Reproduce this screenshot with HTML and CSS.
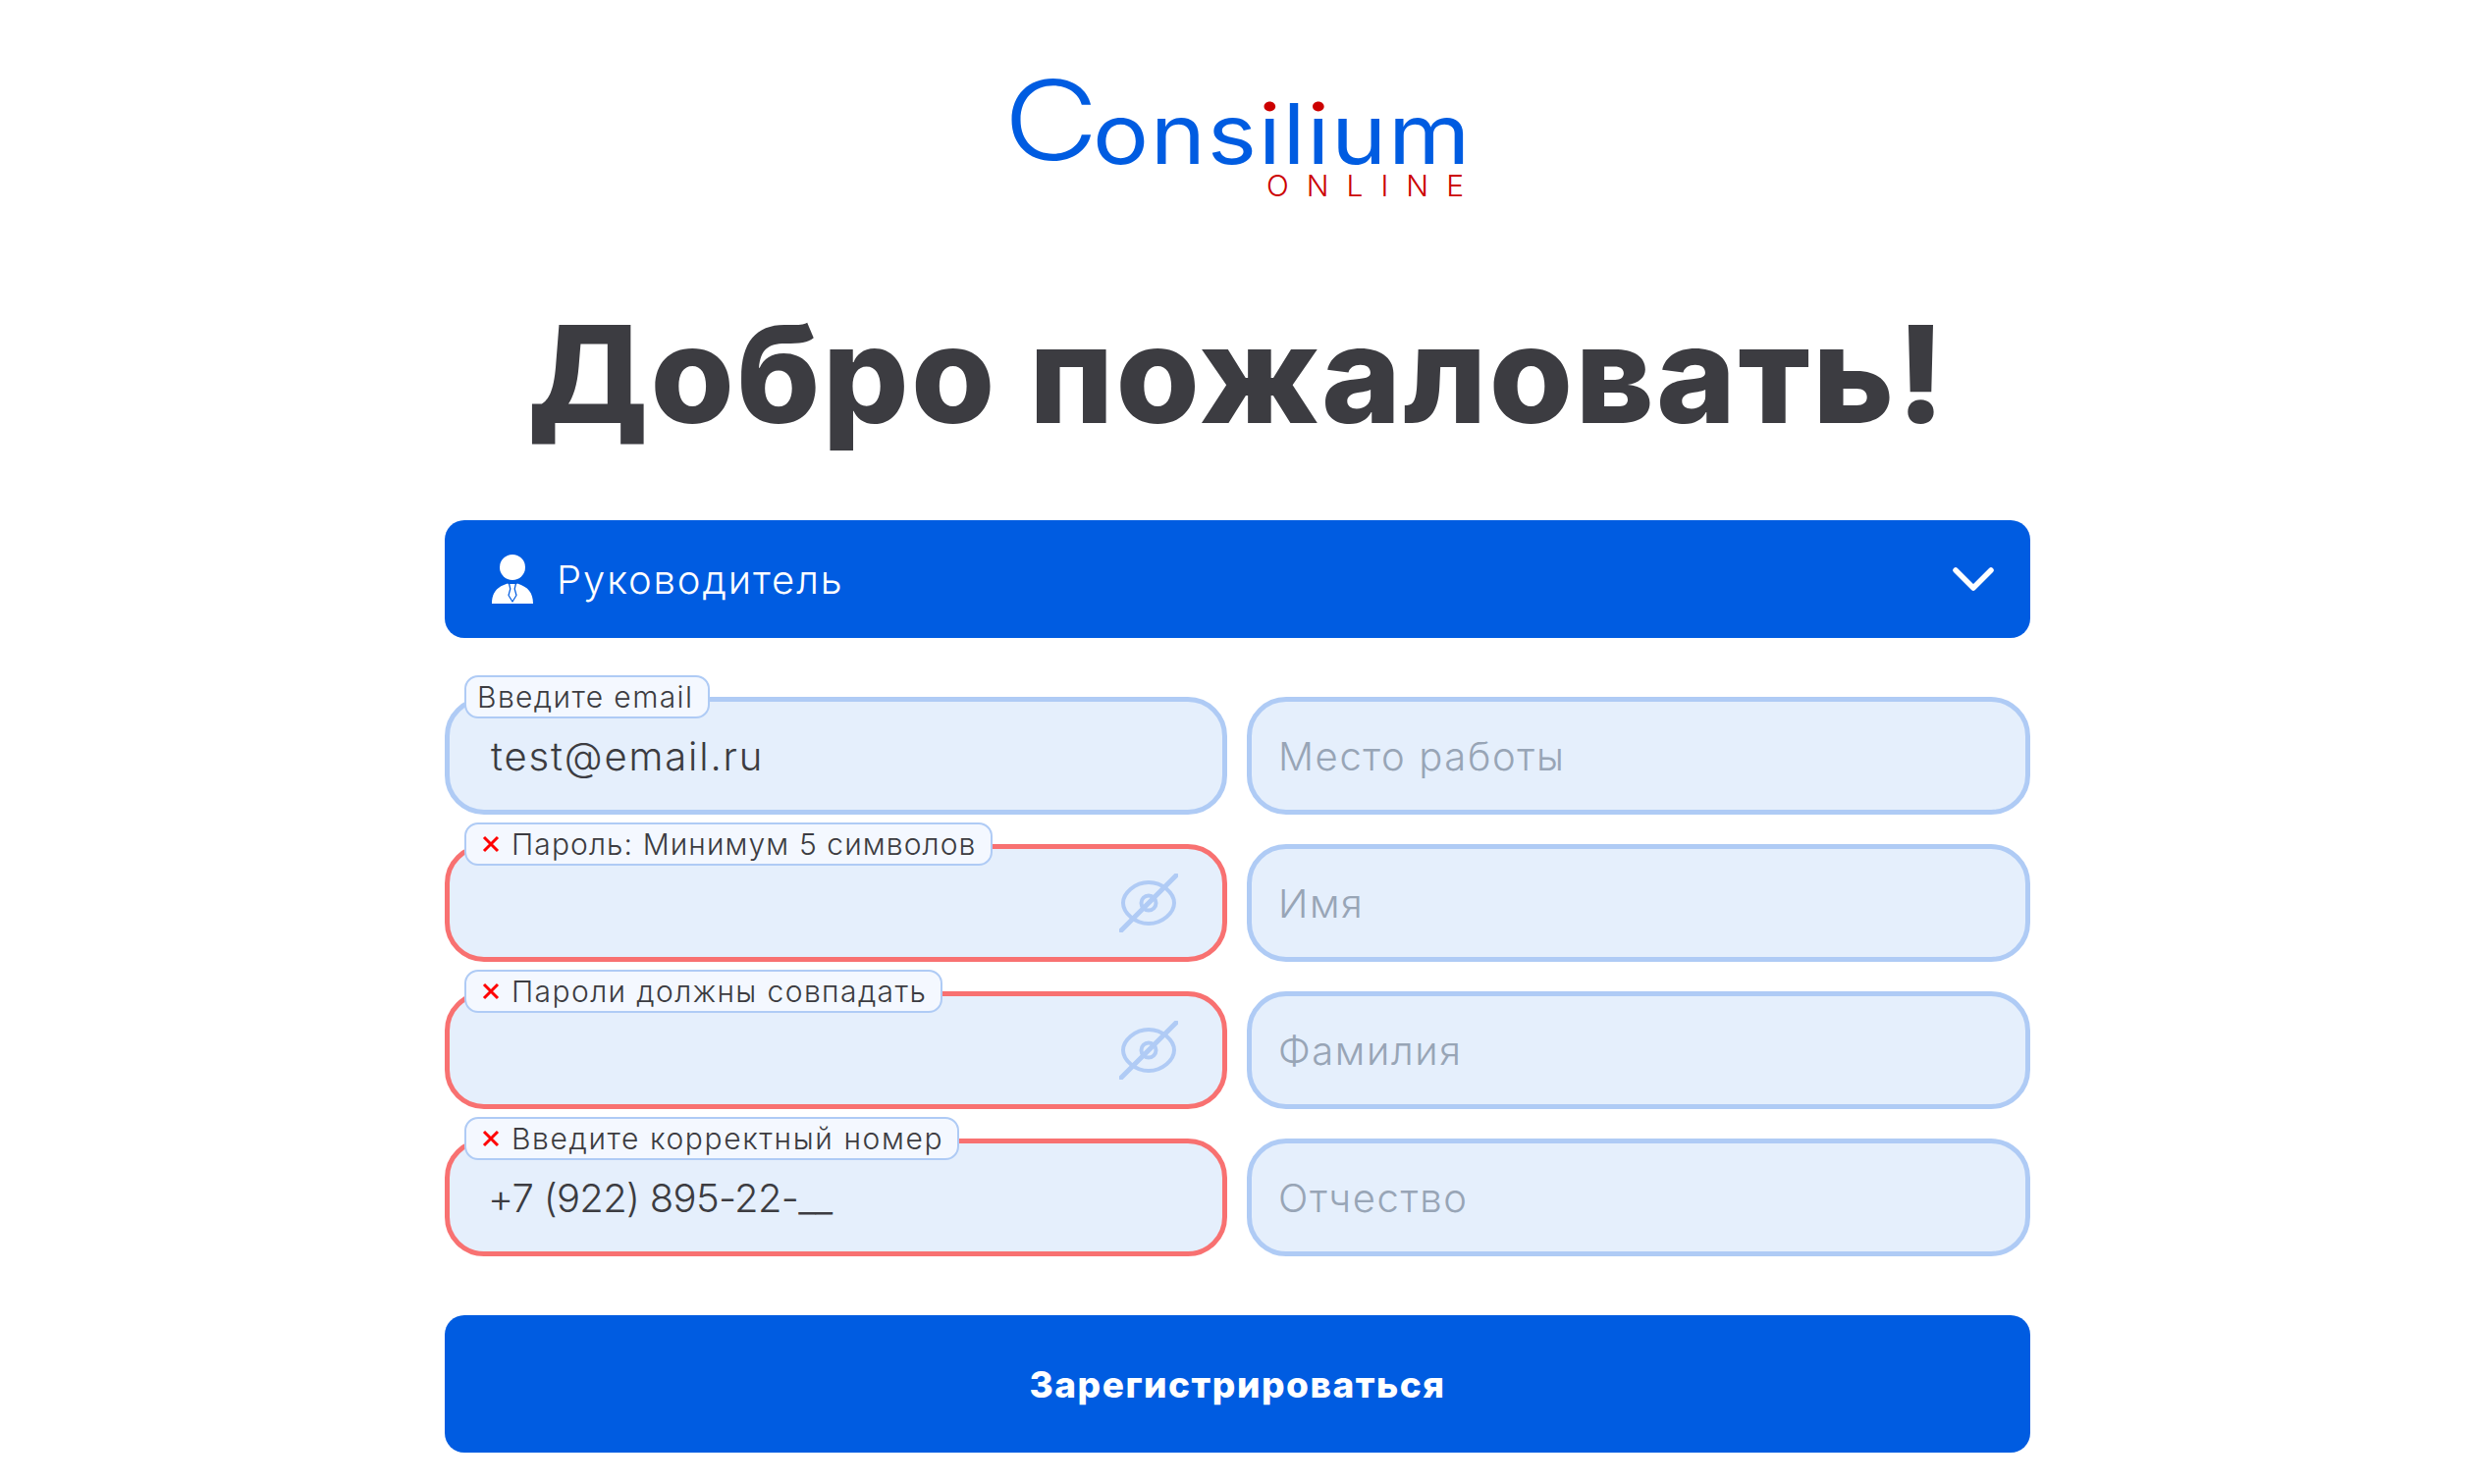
FILE: index.html
```html
<!DOCTYPE html>
<html lang="ru">
<head>
<meta charset="utf-8">
<title>Consilium Online</title>
<link rel="stylesheet" href="styles.css">
</head>
<body>
<main class="page">
  <div class="logo">
    <div class="logo-name"><span class="logo-c">C</span><span class="logo-rest">ons<span class="logo-i">i</span>l<span class="logo-i">i</span>um</span></div>
    <div class="logo-sub">ONLINE</div>
  </div>
  <h1 class="title">Добро пожаловать!</h1>
  <div class="select">
    <svg class="role-icon" viewBox="0 0 42 50" width="42" height="50">
      <circle cx="21" cy="13" r="13" fill="#fff"/>
      <path d="M0 50C0 39 5 33 16 29.500L21 33 26 29.500C37 33 42 39 42 50Z" fill="#fff"/>
      <path d="M17.500 29.500H24.500L23.200 35 25 41.500 21 48 17 41.500 18.800 35Z" fill="#fff" stroke="#005ce1" stroke-width="1.200" stroke-linejoin="round"/>
    </svg>
    <span class="select-text">Руководитель</span>
    <svg class="chevron" viewBox="0 0 44 26" width="44" height="26">
      <path d="M4 4L22 22 40 4" fill="none" stroke="#fff" stroke-width="5.500" stroke-linecap="round" stroke-linejoin="round"/>
    </svg>
  </div>
  <div class="fields">
    <div class="field field-left"><span class="hint hint-plain">Введите email</span><span class="value value-email">test@email.ru</span></div>
    <div class="field field-right"><span class="placeholder">Место работы</span></div>
    <div class="field field-left field-error">
      <span class="hint hint-tight"><svg class="cross" viewBox="0 0 18 18" width="18" height="18"><path d="M2 2L16 16M16 2L2 16" stroke="#ff0000" stroke-width="3"/></svg>Пароль: Минимум 5 символов</span>
      <svg class="eye" viewBox="0 0 60 60" width="60" height="60"><use href="#eye-shape"/></svg>
    </div>
    <div class="field field-right"><span class="placeholder">Имя</span></div>
    <div class="field field-left field-error">
      <span class="hint"><svg class="cross" viewBox="0 0 18 18" width="18" height="18"><path d="M2 2L16 16M16 2L2 16" stroke="#ff0000" stroke-width="3"/></svg>Пароли должны совпадать</span>
      <svg class="eye" viewBox="0 0 60 60" width="60" height="60"><use href="#eye-shape"/></svg>
    </div>
    <div class="field field-right"><span class="placeholder">Фамилия</span></div>
    <div class="field field-left field-error">
      <span class="hint hint-wide"><svg class="cross" viewBox="0 0 18 18" width="18" height="18"><path d="M2 2L16 16M16 2L2 16" stroke="#ff0000" stroke-width="3"/></svg>Введите корректный номер</span>
      <span class="value value-phone">+7 (922) 895-22-__</span>
    </div>
    <div class="field field-right"><span class="placeholder">Отчество</span></div>
  </div>
  <button class="submit" type="button">Зарегистрироваться</button>
</main>
<svg class="defs" width="0" height="0">
  <defs>
    <g id="eye-shape" fill="none" stroke="#b0cbf5" stroke-linecap="round">
      <path d="M4 30C4 20 16 9 30 9S56 20 56 30 44 51 30 51 4 40 4 30Z" stroke-width="4"/>
      <circle cx="30" cy="30" r="7.500" stroke-width="4"/>
      <path d="M2 58L58 2" stroke-width="5"/>
    </g>
  </defs>
</svg>
</body>
</html>
```
FILE: styles.css
```css
* { box-sizing: border-box; }
html, body { margin: 0; padding: 0; background: #fff; }
body { font-family: Inter, "Noto Sans", "Liberation Sans", sans-serif; color: #3c3c41; }
.page { width: 1615px; margin: 0 0 0 453px; display: flex; flex-direction: column; align-items: stretch; }
.defs { position: absolute; }

.logo { align-self: center; width: 461px; height: 128px; margin: 76px 0 0; display: flex; flex-direction: column; align-items: flex-end; }
.logo-name { width: 461px; display: flex; align-items: baseline; color: #005ce1; height: 98px; line-height: 100px; }
.logo-c { display: block; width: 88px; margin-left: -8px; font-size: 112px; font-weight: 300; transform: translateY(-4px) scaleX(1.19); transform-origin: left center; }
.logo-rest { display: block; margin-left: 3px; font-size: 85px; font-weight: 400; letter-spacing: 1.5px; transform: scaleX(1.121); transform-origin: left center; white-space: nowrap; }
.logo-i { background: linear-gradient(#cc0000 0, #cc0000 31px, #005ce1 31px); -webkit-background-clip: text; background-clip: text; color: transparent; }
.logo-sub { font-size: 30px; font-weight: 300; line-height: 30px; letter-spacing: 18px; margin-right: -18px; color: #cc0000; }

.title { margin: 103px 0 0; height: 147px; font-size: 138px; line-height: 147px; font-weight: 800; letter-spacing: 2.3px; text-align: center; color: #3c3c41; white-space: nowrap; }

.select { margin-top: 76px; height: 120px; border-radius: 20px; background: #005ce1; color: #fff; display: flex; align-items: center; padding: 0 36px 0 48px; }
.role-icon { flex: none; }
.select-text { font-size: 40px; font-weight: 300; letter-spacing: 1.9px; margin-left: 24px; flex: 1; }
.chevron { flex: none; }

.fields { margin-top: 60px; display: grid; grid-template-columns: 797px 798px; gap: 30px 20px; }
.field { position: relative; height: 120px; border: 5px solid #afcbf5; border-radius: 40px; background: #e5effc; display: flex; align-items: center; font-size: 40px; font-weight: 300; }
.field-left { padding-left: 39px; }
.field-right { padding-left: 27px; }
.field-error { border-color: #f87171; }
.placeholder { color: #98a5b6; letter-spacing: 1.6px; }
.value { color: #3c3c41; letter-spacing: 1.85px; }
.value-email { margin-left: 3px; }
.value-phone { letter-spacing: -0.7px; }
.hint { position: absolute; left: 15px; top: -27px; height: 44px; display: flex; align-items: center; gap: 12px; padding: 0 14px 0 16px; border: 2px solid #afcbf5; border-radius: 14px; background: #f4f8ff; font-size: 30px; font-weight: 300; letter-spacing: 1.4px; white-space: nowrap; color: #3c3c41; }
.hint-plain { padding: 0 15px 0 11px; }
.hint-tight { letter-spacing: 1.1px; }
.hint-wide { letter-spacing: 1.6px; }
.cross { flex: none; }
.eye { position: absolute; right: 45px; top: 25px; }

.submit { margin-top: 60px; height: 140px; border: 0; border-radius: 20px; background: #005ce1; color: #fff; font-family: inherit; font-size: 37px; font-weight: 800; letter-spacing: 1.5px; }
```
